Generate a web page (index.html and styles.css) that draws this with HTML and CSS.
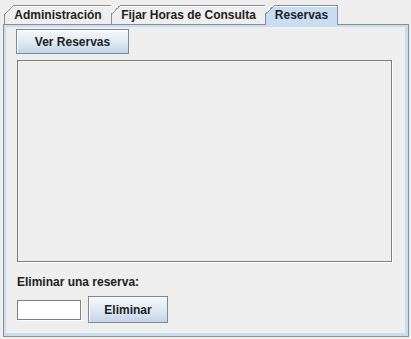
FILE: index.html
```html
<!DOCTYPE html>
<html lang="es">
<head>
  <meta charset="UTF-8">
  <title>Reservas</title>
  <link rel="stylesheet" href="styles.css">
</head>
<body>
  <div class="tabbed">
    <div class="tab-strip">
      <div class="tab tab-first">Administración</div>
      <div class="tab tab-wide">Fijar Horas de Consulta</div>
      <div class="tab tab-selected">Reservas</div>
    </div>
    <div class="pane">
      <div class="pane-body">
        <button class="btn btn-ver">Ver Reservas</button>
        <div class="list-area"></div>
        <div class="label">Eliminar una reserva:</div>
        <div class="delete-row">
          <input type="text" class="field">
          <button class="btn btn-del">Eliminar</button>
        </div>
      </div>
    </div>
  </div>
</body>
</html>
```

FILE: styles.css
```css
body {
  margin: 0;
  background: #eeeeee;
  font-family: "Liberation Sans", Arial, sans-serif;
  font-size: 12px;
  font-weight: bold;
  color: #222222;
}

.tabbed {
  padding: 5px 0 0 3px;
}

.tab-strip {
  display: flex;
  padding-left: 1px;
  position: relative;
  z-index: 1;
}

.tab {
  position: relative;
  height: 18px;
  line-height: 18px;
  border-top: 1px solid #8a8f96;
  border-right: 1px solid #8a8f96;
  background: #eeeeee;
  box-shadow: inset 0 1px 0 #ffffff;
  text-align: center;
}

/* slanted top-left corner of the Metal tabs */
.tab::before {
  content: "";
  position: absolute;
  top: -1px;
  left: -1px;
  width: 9px;
  height: 9px;
  background: linear-gradient(to bottom right, #eeeeee 50%, #8a8f96 50%, #8a8f96 calc(50% + 1px), #eeeeee calc(50% + 1px));
}

.tab-first {
  width: 106px;
  border-left: 1px solid #8a8f96;
}

.tab-wide {
  width: 153px;
}

.tab-selected {
  width: 71px;
  height: 19px;
  margin-bottom: -1px;
  background: #c8ddf2;
}

.tab-selected::before {
  background: linear-gradient(to bottom right, #eeeeee 50%, #8a8f96 50%, #8a8f96 calc(50% + 1px), #c8ddf2 calc(50% + 1px));
}

.pane {
  width: 406px;
  height: 313px;
  border: 1px solid #8a8f96;
  background: #c8ddf2;
  padding: 2px 3px 3px 2px;
  box-sizing: border-box;
}

.pane-body {
  background: #eeeeee;
  height: 100%;
  padding: 2px 10px 0 10px;
  box-sizing: border-box;
}

.btn {
  display: block;
  font-family: inherit;
  font-size: 12px;
  font-weight: bold;
  color: #222222;
  border: 1px solid #7a8a99;
  border-radius: 0;
  background: linear-gradient(#f6f8fb, #dde7f2 55%, #c3d4e8);
  box-shadow: inset 1px 1px 0 #ffffff;
  padding: 0;
}

.btn-ver {
  width: 113px;
  height: 25px;
}

.list-area {
  width: 375px;
  height: 202px;
  margin: 6px 0 0 1px;
  border: 1px solid #7f7f7f;
  box-shadow: 1px 1px 0 #ffffff;
  box-sizing: border-box;
}

.label {
  margin: 13px 0 0 1px;
  line-height: 15px;
}

.delete-row {
  display: flex;
  align-items: center;
  gap: 7px;
  margin: 6px 0 0 1px;
}

.field {
  width: 64px;
  height: 20px;
  box-sizing: border-box;
  border: 1px solid #7f7f7f;
  box-shadow: 1px 1px 0 #ffffff;
  background: #ffffff;
  margin: 0;
  padding: 0 2px;
}

.btn-del {
  width: 80px;
  height: 27px;
}
```
